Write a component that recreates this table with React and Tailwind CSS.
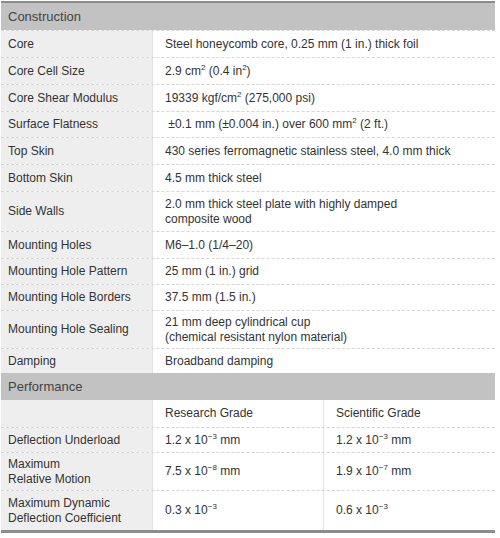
import React from "react";

const Sup = ({ children }) => (
  <sup className="text-[8px] relative -top-[5px]">{children}</sup>
);

const rows = [
  ["Core", "Steel honeycomb core, 0.25 mm (1 in.) thick foil", "h-[27px]"],
  ["Core Cell Size", <>2.9 cm<Sup>2</Sup> (0.4 in<Sup>2</Sup>)</>, "h-[27px]"],
  ["Core Shear Modulus", <>19339 kgf/cm<Sup>2</Sup> (275,000 psi)</>, "h-[27px]"],
  ["Surface Flatness", <>&nbsp;±0.1 mm (±0.004 in.) over 600 mm<Sup>2</Sup> (2 ft.)</>, "h-[26px]"],
  ["Top Skin", "430 series ferromagnetic stainless steel, 4.0 mm thick", "h-[27px]"],
  ["Bottom Skin", "4.5 mm thick steel", "h-[27px]"],
  ["Side Walls", <>2.0 mm thick steel plate with highly damped<br />composite wood</>, "h-[40px]"],
  ["Mounting Holes", "M6–1.0 (1/4–20)", "h-[27px]"],
  ["Mounting Hole Pattern", "25 mm (1 in.) grid", "h-[26px]"],
  ["Mounting Hole Borders", "37.5 mm (1.5 in.)", "h-[26px]"],
  ["Mounting Hole Sealing", <>21 mm deep cylindrical cup<br />(chemical resistant nylon material)</>, "h-[38px]"],
  ["Damping", "Broadband damping", "h-[25px]"],
];

const perf = [
  ["", "Research Grade", "Scientific Grade", "h-[27px]"],
  ["Deflection Underload", <>1.2 x 10<Sup>−3</Sup> mm</>, <>1.2 x 10<Sup>−3</Sup> mm</>, "h-[25px]"],
  [<>Maximum<br />Relative Motion</>, <>7.5 x 10<Sup>−8</Sup> mm</>, <>1.9 x 10<Sup>−7</Sup> mm</>, "h-[38px]"],
  [<>Maximum Dynamic<br />Deflection Coefficient</>, <>0.3 x 10<Sup>−3</Sup></>, <>0.6 x 10<Sup>−3</Sup></>, "h-[40px]"],
];

export default function App() {
  return (
    <div
      className="w-[500px] h-[538px] bg-white pt-[1px] pl-[1px]"
      style={{ fontFamily: '"Liberation Sans", Arial, sans-serif' }}
    >
      <div className="w-[494px] text-[12px] leading-[15px] text-[#333]">
        <div className="h-[29px] bg-[#c2c2c2] border-t-[2px] border-[#8c8c8c] flex items-center pl-[7px] text-[13px] text-[#444]">
          <span>Construction</span>
        </div>
        {rows.map(([l, v, h], i) => (
          <div key={i} className={`flex ${h} border-t border-dashed border-[#d6d6d6]`}>
            <div className="w-[152px] bg-[#eeeeee] flex items-center pl-[7px] border-r border-[#e2e2e2]"><span>{l}</span></div>
            <div className="flex-1 flex items-center pl-[12px]"><span>{v}</span></div>
          </div>
        ))}
        <div className="h-[27px] bg-[#c2c2c2] flex items-center pl-[7px] text-[13px] text-[#444]">
          <span>Performance</span>
        </div>
        {perf.map(([l, a, b, h], i) => (
          <div key={i} className={`flex ${h} ${i > 0 ? "border-t border-dashed border-[#d6d6d6]" : ""}`}>
            <div className="w-[152px] bg-[#eeeeee] flex items-center pl-[7px] border-r border-[#e2e2e2]"><span>{l}</span></div>
            <div className="w-[171px] flex items-center pl-[12px] border-r border-[#e2e2e2]"><span>{a}</span></div>
            <div className="flex-1 flex items-center pl-[12px]"><span>{b}</span></div>
          </div>
        ))}
        <div className="h-[3px] bg-[#8c8c8c]" />
      </div>
    </div>
  );
}
